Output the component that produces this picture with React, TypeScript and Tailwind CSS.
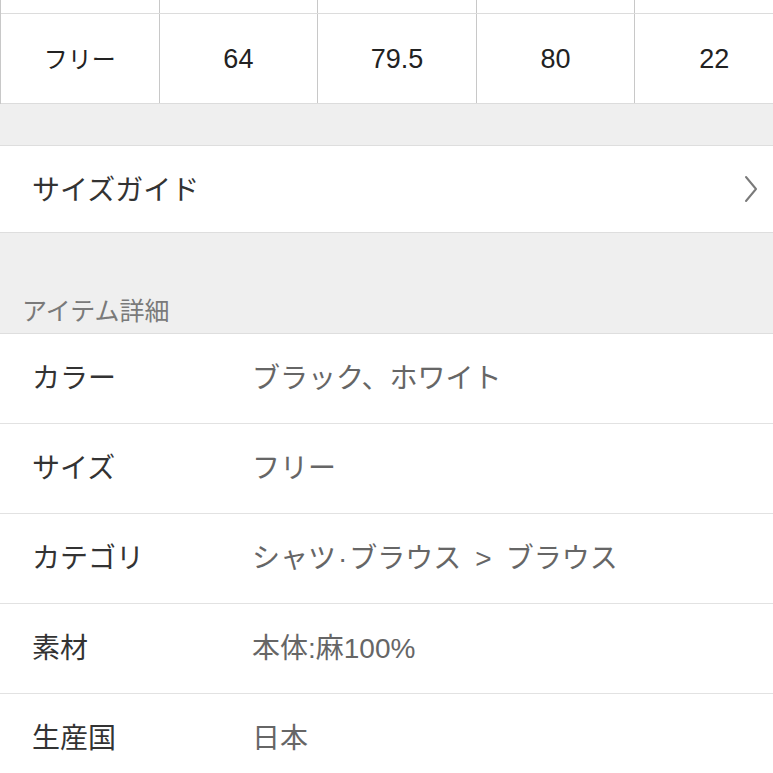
import React from 'react';

const sizeRow = ['フリー', '64', '79.5', '80', '22'];

const details = [
  { label: 'カラー', value: 'ブラック、ホワイト' },
  { label: 'サイズ', value: 'フリー' },
  { label: 'カテゴリ', value: 'シャツ·ブラウス > ブラウス' },
  { label: '素材', value: '本体:麻100%' },
  { label: '生産国', value: '日本' },
];

// breadcrumb style values get a little air around the separators
function Value({ text }: { text: string }) {
  if (!text.includes('>')) return <>{text}</>;
  const [left, right] = text.split(' > ');
  const [a, b] = left.split('·');
  return (
    <>
      {a}
      <span className="mx-[2px]">·</span>
      {b}
      <span className="mx-[14px]">&gt;</span>
      {right}
    </>
  );
}

export default function App() {
  return (
    <div className="w-[773px] h-[773px] overflow-hidden bg-[#efefef] font-['Liberation_Sans','Noto_Sans_CJK_JP',sans-serif]">
      {/* size table, wider than the screen */}
      <div className="w-[793px] bg-white border-l border-[#c8c8c8]">
        <div className="flex h-[14px] border-b border-[#dcdcdc]">
          {sizeRow.map((_, i) => (
            <div key={i} className={`flex-1 ${i > 0 ? 'border-l border-[#c8c8c8]' : ''}`} />
          ))}
        </div>
        <div className="flex h-[90px] border-b border-[#dcdcdc]">
          {sizeRow.map((v, i) => (
            <div
              key={i}
              className={`flex-1 flex items-center justify-center text-[#222] pt-[2px] ${
                i > 0 ? 'border-l border-[#c8c8c8] text-[27px]' : 'text-[24px]'
              }`}
            >
              {v}
            </div>
          ))}
        </div>
      </div>

      <div className="h-[41px]" />

      {/* size guide */}
      <div className="h-[88px] bg-white border-y border-[#dedede] flex items-center justify-between pl-[32px] pr-[15px]">
        <span className="text-[28px] text-[#333] pt-[4px]">サイズガイド</span>
        <svg width="14" height="28" viewBox="0 0 14 28" fill="none">
          <path d="M2 2 L12 14 L2 26" stroke="#7a7a7a" strokeWidth="2" strokeLinecap="round" strokeLinejoin="round" />
        </svg>
      </div>

      {/* section header */}
      <div className="h-[100px] flex items-end pl-[22px] pb-[3px]">
        <span className="text-[25px] text-[#7a7a7a]">アイテム詳細</span>
      </div>

      <div className="bg-white border-t border-[#dedede]">
        {details.map((d) => (
          <div key={d.label} className="h-[90px] flex items-center border-b border-[#e2e2e2] pl-[32px]">
            <span className="w-[220px] text-[28px] text-[#333]">{d.label}</span>
            <span className="text-[28px] text-[#666] whitespace-pre">
              <Value text={d.value} />
            </span>
          </div>
        ))}
      </div>
    </div>
  );
}
